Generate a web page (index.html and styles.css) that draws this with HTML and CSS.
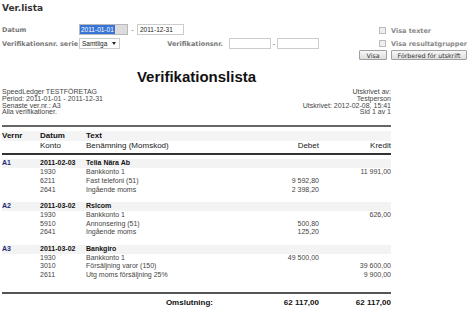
FILE: index.html
```html
<!DOCTYPE html>
<html lang="sv">
<head>
<meta charset="utf-8">
<title>Ver.lista</title>
<link rel="stylesheet" href="styles.css">
</head>
<body>
<div class="page">
  <div class="top">
    <h1 class="pagetitle">Ver.lista</h1>
    <div class="filters">
      <div class="fields">
        <div class="frow">
          <span class="lbl">Datum</span>
          <span class="inp w49 focus"><span class="sel">2011-01-01</span></span>
          <span class="dash">-</span>
          <span class="inp w47">2011-12-31</span>
        </div>
        <div class="frow">
          <span class="lbl">Verifikationsnr. serie</span>
          <span class="select">Samtliga<span class="caret"></span></span>
          <span class="lbl2">Verifikationsnr.</span>
          <span class="inp w42"></span>
          <span class="dash dash2">-</span>
          <span class="inp w42"></span>
        </div>
      </div>
      <div class="options">
        <div class="checks">
          <label class="chk"><span class="box"></span>Visa texter</label>
          <label class="chk"><span class="box"></span>Visa resultatgrupper</label>
        </div>
        <div class="btns">
          <span class="btn b1">Visa</span>
          <span class="btn b2">Förbered för utskrift</span>
        </div>
      </div>
    </div>
  </div>

  <div class="report">
    <h2 class="rtitle">Verifikationslista</h2>
    <div class="meta">
      <div class="meta-left">
        <div>SpeedLedger TESTFÖRETAG</div>
        <div>Period: 2011-01-01 - 2011-12-31</div>
        <div>Senaste ver.nr.: A3</div>
        <div>Alla verifikationer.</div>
      </div>
      <div class="meta-right">
        <div>Utskrivet av:</div>
        <div>Testperson</div>
        <div>Utskrivet: 2012-02-08, 15:41</div>
        <div>Sid 1 av 1</div>
      </div>
    </div>

    <div class="table">
      <div class="thead">
        <div class="row r1"><span>Vernr</span><span>Datum</span><span>Text</span><span></span><span></span></div>
        <div class="row r2"><span></span><span>Konto</span><span>Benämning (Momskod)</span><span class="num">Debet</span><span class="num">Kredit</span></div>
      </div>

      <div class="grp">
        <div class="row gh"><span class="vn">A1</span><span>2011-02-03</span><span>Telia Nära Ab</span><span></span><span></span></div>
        <div class="row"><span></span><span>1930</span><span>Bankkonto 1</span><span class="num"></span><span class="num">11 991,00</span></div>
        <div class="row"><span></span><span>6211</span><span>Fast telefoni (51)</span><span class="num">9 592,80</span><span class="num"></span></div>
        <div class="row"><span></span><span>2641</span><span>Ingående moms</span><span class="num">2 398,20</span><span class="num"></span></div>
      </div>

      <div class="grp">
        <div class="row gh"><span class="vn">A2</span><span>2011-03-02</span><span>Rslcom</span><span></span><span></span></div>
        <div class="row"><span></span><span>1930</span><span>Bankkonto 1</span><span class="num"></span><span class="num">626,00</span></div>
        <div class="row"><span></span><span>5910</span><span>Annonsering (51)</span><span class="num">500,80</span><span class="num"></span></div>
        <div class="row"><span></span><span>2641</span><span>Ingående moms</span><span class="num">125,20</span><span class="num"></span></div>
      </div>

      <div class="grp">
        <div class="row gh"><span class="vn">A3</span><span>2011-03-02</span><span>Bankgiro</span><span></span><span></span></div>
        <div class="row"><span></span><span>1930</span><span>Bankkonto 1</span><span class="num">49 500,00</span><span class="num"></span></div>
        <div class="row"><span></span><span>3010</span><span>Försäljning varor (150)</span><span class="num"></span><span class="num">39 600,00</span></div>
        <div class="row"><span></span><span>2611</span><span>Utg moms försäljning 25%</span><span class="num"></span><span class="num">9 900,00</span></div>
      </div>

      <div class="row total"><span></span><span></span><span class="num">Omslutning:</span><span class="num">62 117,00</span><span class="num">62 117,00</span></div>
    </div>
  </div>
</div>
</body>
</html>
```
FILE: styles.css
```css
html, body {
  margin: 0;
  padding: 0;
  background: #ffffff;
}

.page {
  padding: 3px 8px 0 2px;
  font-family: "DejaVu Sans", Verdana, sans-serif;
}

.pagetitle {
  margin: 0;
  font-size: 9px;
  line-height: 10px;
  font-weight: bold;
  color: #333333;
}

.filters {
  display: flex;
  justify-content: space-between;
  align-items: flex-start;
  margin-top: 11px;
}

.fields {
  display: flex;
  flex-direction: column;
  gap: 3px;
}

.frow {
  display: flex;
  align-items: center;
  height: 11px;
}

.lbl {
  width: 77px;
  font-size: 6.5px;
  font-weight: bold;
  color: #777777;
  white-space: nowrap;
}

.lbl2 {
  width: 109px;
  box-sizing: border-box;
  padding-right: 6px;
  text-align: right;
  font-size: 6.5px;
  font-weight: bold;
  color: #777777;
  white-space: nowrap;
}

.inp {
  box-sizing: border-box;
  height: 11px;
  border: 1px solid #cccccc;
  background: #ffffff;
  font-family: "Liberation Sans", Arial, sans-serif;
  font-size: 6.5px;
  line-height: 9px;
  padding: 0 2px;
  color: #222222;
  white-space: nowrap;
}

.w49 { width: 49px; }
.w47 { width: 47px; }
.w42 { width: 42px; }

.focus {
  padding: 0;
  background: #dcdcdc;
  border-color: #b8b8b8;
}

.sel {
  display: inline-block;
  padding: 0 1px;
  background: #3875d7;
  color: #ffffff;
}

.dash {
  width: 9px;
  text-align: center;
  font-family: "Liberation Sans", Arial, sans-serif;
  font-size: 7px;
  color: #555555;
}

.dash2 { width: 6px; }

.select {
  box-sizing: border-box;
  width: 41px;
  height: 11px;
  display: flex;
  align-items: center;
  padding: 0 3px 0 2px;
  border: 1px solid #cccccc;
  background: #ffffff;
  font-family: "Liberation Sans", Arial, sans-serif;
  font-size: 6.5px;
  color: #222222;
}

.caret {
  margin-left: auto;
  width: 0;
  height: 0;
  border-left: 2px solid transparent;
  border-right: 2px solid transparent;
  border-top: 3px solid #222222;
}

.options {
  display: flex;
  flex-direction: column;
  align-items: flex-end;
  padding-top: 2px;
}

.checks {
  display: flex;
  flex-direction: column;
  gap: 4px;
}

.chk {
  display: flex;
  align-items: center;
  height: 9px;
  font-size: 6.5px;
  font-weight: bold;
  color: #888888;
  white-space: nowrap;
}

.box {
  box-sizing: border-box;
  width: 7px;
  height: 7px;
  margin-right: 5px;
  border: 1px solid #bbbbbb;
  background: #eeeeee;
}

.btns {
  display: flex;
  gap: 4px;
  margin-top: 2px;
}

.btn {
  box-sizing: border-box;
  height: 10px;
  display: flex;
  align-items: center;
  justify-content: center;
  border: 1px solid #a0a0a0;
  border-radius: 1px;
  background: linear-gradient(#f7f7f7, #dddddd);
  font-size: 6.3px;
  color: #333333;
  white-space: nowrap;
}

.b1 { width: 28px; }
.b2 { width: 76px; }

.report {
  width: 389px;
  margin-top: 8px;
  font-family: "Liberation Sans", Arial, sans-serif;
  color: #333333;
}

.rtitle {
  margin: 0;
  text-align: center;
  font-size: 15px;
  line-height: 17px;
  font-weight: bold;
  color: #111111;
}

.meta {
  display: flex;
  justify-content: space-between;
  margin-top: 4px;
  font-size: 7px;
  line-height: 6.8px;
  color: #444444;
}

.meta-right {
  text-align: right;
}

.table {
  margin-top: 9px;
  border-top: 2px solid #666666;
  padding-top: 4px;
}

.row {
  display: grid;
  grid-template-columns: 38px 46px 127px 106px 72px;
  white-space: nowrap;
}

.num {
  text-align: right;
}

.thead {
  padding-bottom: 2px;
  border-bottom: 2px solid #333333;
  margin-bottom: 4px;
}

.thead .row {
  font-size: 8px;
  line-height: 10px;
  color: #222222;
}

.thead .r1 {
  background: #f4f4f4;
  font-weight: bold;
  color: #111111;
}

.grp {
  margin-bottom: 7.6px;
}

.grp .row {
  font-size: 7px;
  line-height: 8.8px;
  color: #444444;
}

.grp .gh {
  background: #f3f3f3;
  font-weight: bold;
  color: #111111;
}

.grp .gh .vn {
  color: #1d2a7a;
}

.total {
  margin-top: 12.2px;
  border-top: 2px solid #555555;
  padding-top: 4px;
  font-size: 8px;
  line-height: 10px;
  font-weight: bold;
  color: #111111;
}
```
